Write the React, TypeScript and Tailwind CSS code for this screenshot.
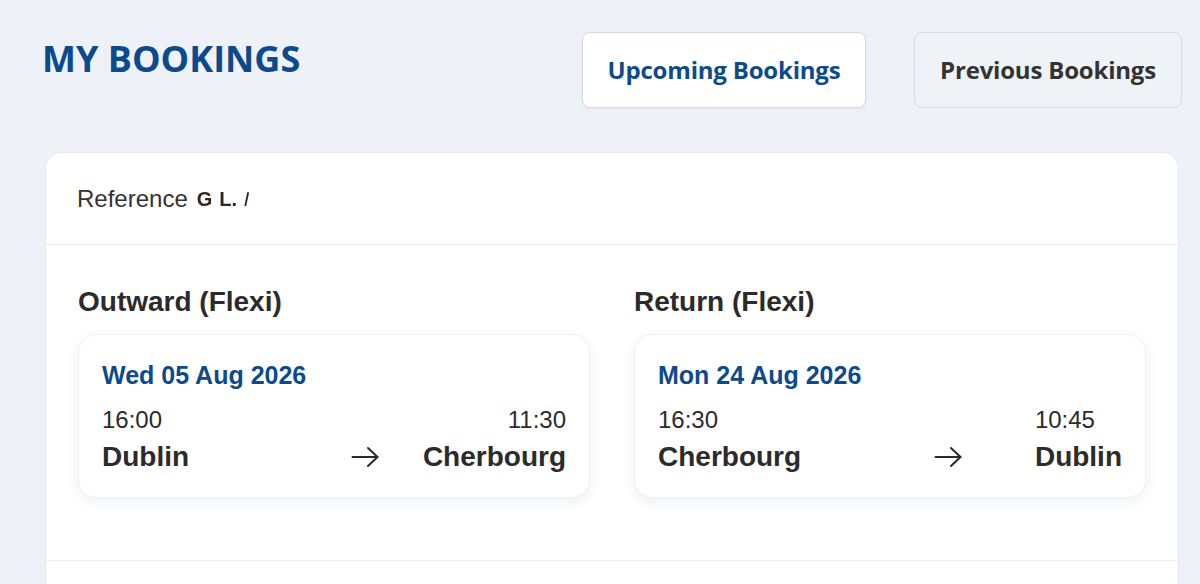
type Leg = {
    title: string;
    date: string;
    depTime: string;
    from: string;
    arrTime: string;
    to: string;
    gap: string;
    arrAlign: string;
};

const legs: Leg[] = [
    {
        title: "Outward (Flexi)",
        date: "Wed 05 Aug 2026",
        depTime: "16:00",
        from: "Dublin",
        arrTime: "11:30",
        to: "Cherbourg",
        gap: "gap-x-[44px]",
        arrAlign: "text-right",
    },
    {
        title: "Return (Flexi)",
        date: "Mon 24 Aug 2026",
        depTime: "16:30",
        from: "Cherbourg",
        arrTime: "10:45",
        to: "Dublin",
        gap: "gap-x-[73px]",
        arrAlign: "text-left",
    },
];

function Arrow() {
    return (
        <svg width="28" height="24" viewBox="0 0 28 24" fill="none" stroke="#2b2b2b" strokeWidth="2" strokeLinecap="round" strokeLinejoin="round" className="mt-[7px]">
            <path d="M1.5 12h25" />
            <path d="M17 3l9.5 9-9.5 9" />
        </svg>
    );
}

function LegCard({ leg }: { leg: Leg }) {
    return (
        <div>
            <h3 className="text-[28px] leading-[32px] font-bold text-[#2b2b2b] mb-[16px]">{leg.title}</h3>
            <div className="rounded-[18px] border border-[#edf0f4] bg-white shadow-[0_4px_14px_rgba(15,40,80,0.07)] px-[23px] pt-[26px] pb-[24px]">
                <p className="text-[25px] leading-[29px] font-bold text-[#0d4a8c]">{leg.date}</p>
                <div className={`mt-[16px] grid grid-cols-[1fr_auto_auto] items-center ${leg.gap} text-[#2b2b2b]`}>
                    <span className="text-[24px] leading-[28px]">{leg.depTime}</span>
                    <span />
                    <span className={`text-[24px] leading-[28px] ${leg.arrAlign}`}>{leg.arrTime}</span>
                    <span className="mt-[7px] text-[28px] leading-[32px] font-bold">{leg.from}</span>
                    <Arrow />
                    <span className="mt-[7px] text-[28px] leading-[32px] font-bold">{leg.to}</span>
                </div>
            </div>
        </div>
    );
}

export default function App() {
    return (
        <div className="min-h-screen bg-[#eef2f8] pl-[42px] pr-[18px] pt-[32px] font-['Liberation_Sans',Arial,sans-serif]">
            <div className="flex items-start justify-between">
                <h1 className="mt-[5px] font-['Open_Sans',sans-serif] text-[36px] leading-[44px] font-bold text-[#0d4a8c]">
                    MY BOOKINGS
                </h1>
                <div className="flex gap-[48px] font-['Open_Sans',sans-serif] text-[24px] font-bold tracking-[-0.2px]">
                    <button className="h-[76px] w-[284px] rounded-lg border border-[#d6dbe3] bg-white text-[#0d4a8c] shadow-[0_1px_3px_rgba(0,0,0,0.05)]">
                        Upcoming Bookings
                    </button>
                    <button className="h-[76px] w-[268px] rounded-lg border border-[#d6dbe3] bg-[#eff2f7] text-[#333]">
                        Previous Bookings
                    </button>
                </div>
            </div>

            <div className="mx-[3px] mt-[44px] rounded-2xl border border-[#e4e8ee] bg-white">
                <div className="flex h-[92px] items-center border-b border-[#e6e8ec] px-[31px]">
                    <span className="text-[24px] text-[#333]">Reference</span>
                    <span className="ml-[9px] flex items-center gap-[7px] text-[20px] font-bold text-[#33261c] blur-[0.7px]">
                        <span>G</span>
                        <span>L.</span>
                        <span className="-skew-x-12 font-normal">I</span>
                    </span>
                </div>
                <div className="grid grid-cols-2 gap-[44px] border-b border-[#eceef1] px-[32px] pt-[41px] pb-[62px]">
                    {legs.map((leg) => (
                        <LegCard key={leg.title} leg={leg} />
                    ))}
                </div>
                <div className="h-[40px]" />
            </div>
        </div>
    );
}
